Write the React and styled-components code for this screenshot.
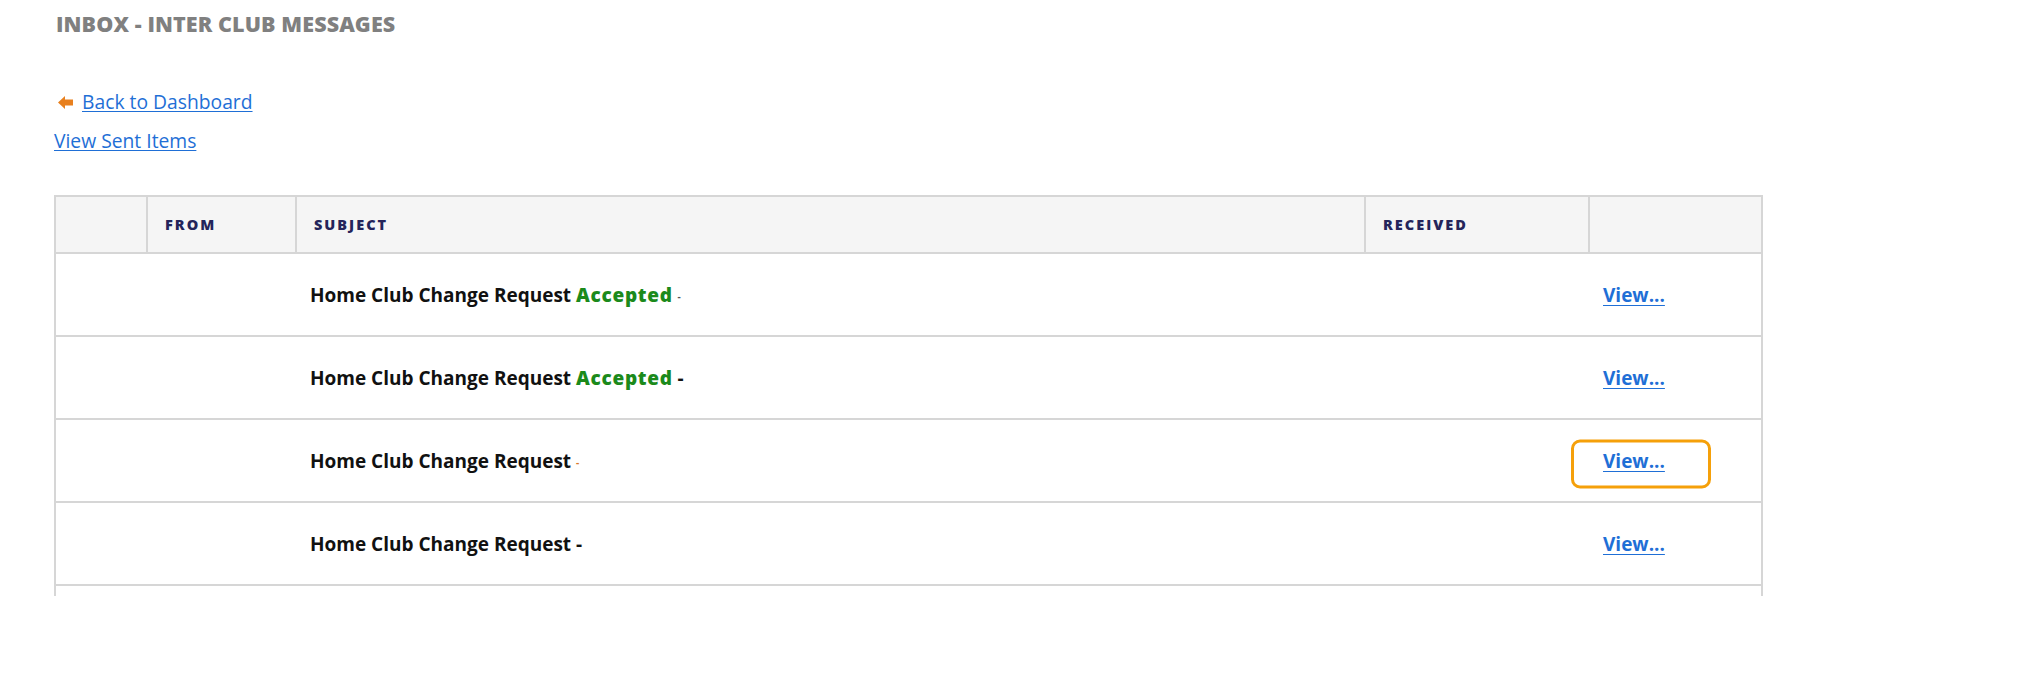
import React from "react";
import styled, { createGlobalStyle } from "styled-components";

const GlobalStyle = createGlobalStyle`
  html, body { margin: 0; padding: 0; background: #ffffff; }
  body { font-family: "Open Sans", "Liberation Sans", sans-serif; }
`;

const Page = styled.div`
  padding: 12px 0 0 54px;
  width: 1707px;
`;

const Title = styled.h1`
  margin: 0 0 0 2px;
  font-size: 21.5px;
  line-height: 24px;
  font-weight: 800;
  color: #808080;
  letter-spacing: 0.1px;
`;

const LinkList = styled.div`
  display: flex;
  flex-direction: column;
  align-items: flex-start;
  gap: 15px;
  margin-top: 54px;
`;

const LinkRow = styled.div`
  display: flex;
  align-items: center;
  gap: 9px;
  padding-left: ${(p) => (p.$indent ? "4px" : "0")};
`;

const TextLink = styled.a`
  font-size: 19.3px;
  line-height: 24px;
  color: #1f6fd6;
  text-decoration: underline;
  text-underline-offset: 2px;
  cursor: pointer;
`;

const Table = styled.table`
  margin-top: 42px;
  width: 1707px;
  border-collapse: collapse;
  table-layout: fixed;
  border-left: 2px solid #d6d6d6;
  border-right: 2px solid #d6d6d6;
`;

const HeadCell = styled.th`
  background: #f5f5f5;
  border: 2px solid #d6d6d6;
  height: 55px;
  padding: 0 0 0 17px;
  text-align: left;
  font-size: 14.5px;
  font-weight: 800;
  letter-spacing: 2px;
  color: #24245a;
`;

const Row = styled.tr`
  border-bottom: ${(p) => (p.$last ? "none" : "2px solid #d6d6d6")};
`;

const Cell = styled.td`
  height: ${(p) => (p.$short ? "10px" : "81px")};
  padding: 0 0 0 14px;
  vertical-align: middle;
  font-size: 19px;
  font-weight: 700;
  color: #111111;
  position: relative;
`;

const Status = styled.span`
  color: #1b8a1b;
  font-weight: 800;
  letter-spacing: 0.7px;
`;

const Sep = styled.span`
  font-size: ${(p) => (p.$small ? "10px" : "19px")};
  color: ${(p) => (p.$tone === "orange" ? "#d9772a" : p.$tone === "grey" ? "#555555" : "#111111")};
  vertical-align: ${(p) => (p.$small ? "2px" : "baseline")};
`;

const ViewLink = styled.a`
  font-size: 19px;
  font-weight: 700;
  color: #1f6fd6;
  text-decoration: underline;
  text-underline-offset: 3px;
  cursor: pointer;
`;

const Highlight = styled.span`
  position: absolute;
  left: -18px;
  top: 50%;
  transform: translateY(-50%);
  margin-top: 3px;
  width: 134px;
  height: 43px;
  border: 3px solid #f5a00a;
  border-radius: 9px;
  pointer-events: none;
`;

const ArrowIcon = () => (
  <svg width="15" height="13" viewBox="0 0 15 13" aria-hidden="true">
    <polygon points="0,6.5 7,0 7,3.5 15,3.5 15,9.5 7,9.5 7,13" fill="#e8801e" />
  </svg>
);

const rows = [
  { status: "Accepted", sep: "-", small: true, tone: "grey" },
  { status: "Accepted", sep: "-", small: false, tone: "dark" },
  { status: null, sep: "-", small: true, tone: "orange", highlight: true },
  { status: null, sep: "-", small: false, tone: "dark" },
];

export default function App() {
  return (
    <>
      <GlobalStyle />
      <Page>
        <Title>INBOX - INTER CLUB MESSAGES</Title>
        <LinkList>
          <LinkRow $indent>
            <ArrowIcon />
            <TextLink>Back to Dashboard</TextLink>
          </LinkRow>
          <LinkRow>
            <TextLink>View Sent Items</TextLink>
          </LinkRow>
        </LinkList>
        <Table>
          <colgroup>
            <col style={{ width: "92px" }} />
            <col style={{ width: "149px" }} />
            <col style={{ width: "1069px" }} />
            <col style={{ width: "224px" }} />
            <col style={{ width: "173px" }} />
          </colgroup>
          <thead>
            <tr>
              <HeadCell />
              <HeadCell>FROM</HeadCell>
              <HeadCell>SUBJECT</HeadCell>
              <HeadCell>RECEIVED</HeadCell>
              <HeadCell />
            </tr>
          </thead>
          <tbody>
            {rows.map((r, i) => (
              <Row key={i}>
                <Cell />
                <Cell />
                <Cell>
                  Home Club Change Request{" "}
                  {r.status && <Status>{r.status}</Status>}
                  {r.status && " "}
                  <Sep $small={r.small} $tone={r.tone}>
                    {r.sep}
                  </Sep>
                </Cell>
                <Cell />
                <Cell>
                  <ViewLink>View...</ViewLink>
                  {r.highlight && <Highlight />}
                </Cell>
              </Row>
            ))}
            <Row $last>
              <Cell $short />
              <Cell $short />
              <Cell $short />
              <Cell $short />
              <Cell $short />
            </Row>
          </tbody>
        </Table>
      </Page>
    </>
  );
}
